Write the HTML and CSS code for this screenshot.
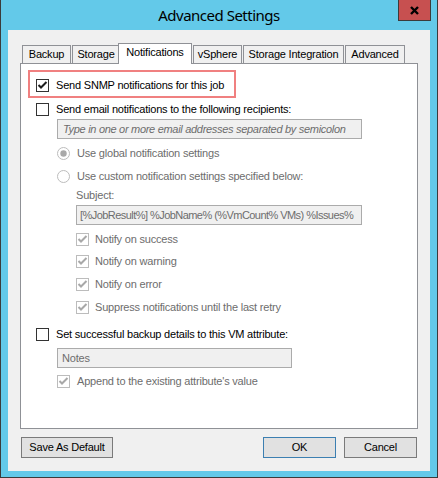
FILE: index.html
```html
<!DOCTYPE html>
<html>
<head>
<meta charset="utf-8">
<title>Advanced Settings</title>
<link rel="stylesheet" href="styles.css">
</head>
<body>
<div class="window">
  <div class="titlebar">
    <div class="title">Advanced Settings</div>
    <div class="close"><svg width="9" height="9" viewBox="0 0 9 9"><path d="M1 1 L8 8 M8 1 L1 8" stroke="#000" stroke-width="2.4" fill="none"/></svg></div>
  </div>
  <div class="client">
    <div class="tabs">
      <div class="tab t-backup">Backup</div>
      <div class="tab t-storage">Storage</div>
      <div class="tab selected t-notif">Notifications</div>
      <div class="tab t-vsphere">vSphere</div>
      <div class="tab t-si">Storage Integration</div>
      <div class="tab t-adv">Advanced</div>
    </div>
    <div class="panel">
      <div class="highlight">
        <div class="row top">
          <svg class="cb" width="13" height="13" viewBox="0 0 13 13"><rect x="0.5" y="0.5" width="12" height="12" fill="#fff" stroke="#333"/><path d="M2.5 6 L5 8.5 L10.5 3" fill="none" stroke="#1e1e1e" stroke-width="2"/></svg>
          <span>Send SNMP notifications for this job</span>
        </div>
      </div>
      <div class="section">
        <div class="row top email-row">
          <svg class="cb" width="13" height="13" viewBox="0 0 13 13"><rect x="0.5" y="0.5" width="12" height="12" fill="#fff" stroke="#333"/></svg>
          <span>Send email notifications to the following recipients:</span>
        </div>
        <div class="sub">
          <div class="field email-field">Type in one or more email addresses separated by semicolon</div>
          <div class="row mid dis global">
            <svg class="cb" width="13" height="13" viewBox="0 0 13 13"><circle cx="6.5" cy="6.5" r="6" fill="#fff" stroke="#bcbcbc"/><circle cx="6.5" cy="6.5" r="3.2" fill="#a9a9a9"/></svg>
            <span>Use global notification settings</span>
          </div>
          <div class="row mid dis custom">
            <svg class="cb" width="13" height="13" viewBox="0 0 13 13"><circle cx="6.5" cy="6.5" r="6" fill="#fff" stroke="#bcbcbc"/></svg>
            <span>Use custom notification settings specified below:</span>
          </div>
          <div class="subsub">
            <div class="subject-label dis">Subject:</div>
            <div class="field subject-field">[%JobResult%] %JobName% (%VmCount% VMs) %Issues%</div>
            <div class="row deep dis n-success">
              <svg class="cb" width="13" height="13" viewBox="0 0 13 13"><rect x="0.5" y="0.5" width="12" height="12" fill="#fff" stroke="#bcbcbc"/><path d="M2.5 6 L5 8.5 L10.5 3" fill="none" stroke="#a8a8a8" stroke-width="2"/></svg>
              <span>Notify on success</span>
            </div>
            <div class="row deep dis n-warning">
              <svg class="cb" width="13" height="13" viewBox="0 0 13 13"><rect x="0.5" y="0.5" width="12" height="12" fill="#fff" stroke="#bcbcbc"/><path d="M2.5 6 L5 8.5 L10.5 3" fill="none" stroke="#a8a8a8" stroke-width="2"/></svg>
              <span>Notify on warning</span>
            </div>
            <div class="row deep dis n-error">
              <svg class="cb" width="13" height="13" viewBox="0 0 13 13"><rect x="0.5" y="0.5" width="12" height="12" fill="#fff" stroke="#bcbcbc"/><path d="M2.5 6 L5 8.5 L10.5 3" fill="none" stroke="#a8a8a8" stroke-width="2"/></svg>
              <span>Notify on error</span>
            </div>
            <div class="row deep dis n-suppress">
              <svg class="cb" width="13" height="13" viewBox="0 0 13 13"><rect x="0.5" y="0.5" width="12" height="12" fill="#fff" stroke="#bcbcbc"/><path d="M2.5 6 L5 8.5 L10.5 3" fill="none" stroke="#a8a8a8" stroke-width="2"/></svg>
              <span>Suppress notifications until the last retry</span>
            </div>
          </div>
        </div>
        <div class="row top vm-row">
          <svg class="cb" width="13" height="13" viewBox="0 0 13 13"><rect x="0.5" y="0.5" width="12" height="12" fill="#fff" stroke="#333"/></svg>
          <span>Set successful backup details to this VM attribute:</span>
        </div>
        <div class="sub">
          <div class="field notes-field">Notes</div>
          <div class="row mid dis append">
            <svg class="cb" width="13" height="13" viewBox="0 0 13 13"><rect x="0.5" y="0.5" width="12" height="12" fill="#fff" stroke="#bcbcbc"/><path d="M2.5 6 L5 8.5 L10.5 3" fill="none" stroke="#a8a8a8" stroke-width="2"/></svg>
            <span>Append to the existing attribute's value</span>
          </div>
        </div>
      </div>
    </div>
    <div class="buttons">
      <div class="btn save">Save As Default</div>
      <div class="btn ok">OK</div>
      <div class="btn cancel">Cancel</div>
    </div>
  </div>
</div>
</body>
</html>
```
FILE: styles.css
```css
* { box-sizing: border-box; }
html, body { margin: 0; padding: 0; }
body {
  width: 438px;
  height: 478px;
  font-family: "Liberation Sans", Arial, sans-serif;
  font-size: 11px;
  color: #000;
  background: #fff;
}
.window {
  width: 438px;
  height: 478px;
  background: #63c9e9;
  border: 1px solid #3b3b3b;
  border-top: none;
  padding: 0 7px 6px;
  display: flex;
  flex-direction: column;
}
.titlebar {
  height: 30px;
  flex: none;
  display: grid;
  grid-template-columns: 1fr auto 1fr;
}
.title {
  grid-column: 2;
  font-family: "Noto Sans", sans-serif;
  font-size: 15px;
  line-height: 30px;
  letter-spacing: -0.5px;
  color: #000;
  white-space: nowrap;
}
.close {
  grid-column: 3;
  justify-self: end;
  align-self: start;
  width: 33px;
  height: 21px;
  margin-right: -1px;
  background: #c75050;
  border: 1px solid #3b3b3b;
  border-top: none;
  display: flex;
  align-items: center;
  justify-content: center;
  padding-top: 1px;
}
.client {
  height: 441px;
  flex: none;
  background: #f0f0f0;
  padding: 13px 12px 13px;
  display: flex;
  flex-direction: column;
  letter-spacing: -0.2px;
}
.tabs {
  height: 20px;
  flex: none;
  display: flex;
  align-items: flex-end;
  padding-left: 2px;
}
.tab {
  height: 18px;
  border: 1px solid #8f9196;
  border-bottom: none;
  background: #f0f0f0;
  text-align: center;
  padding-top: 2px;
  line-height: 13px;
  white-space: nowrap;
  margin-right: 1px;
  flex: none;
}
.tab.selected {
  height: 21px;
  margin-bottom: -1px;
  margin-left: -2px;
  background: #fff;
  position: relative;
  z-index: 1;
}
.t-backup { width: 49px; }
.t-storage { width: 48px; margin-right: 0; }
.t-notif { width: 74px; }
.t-vsphere { width: 49px; }
.t-si { width: 101px; }
.t-adv { width: 60px; }
.panel {
  height: 366px;
  flex: none;
  background: #fff;
  border: 1px solid #8f9196;
  padding: 6px 0 0 7px;
}
.highlight {
  width: 208px;
  height: 28px;
  border: 2px solid #f08080;
  padding: 7px 0 0 6px;
}
.section { padding-left: 8px; }
.sub { padding-left: 21px; }
.subsub { padding-left: 19px; }
.row {
  display: flex;
  align-items: center;
  height: 13px;
  line-height: 13px;
  white-space: nowrap;
}
.row.top { gap: 7px; }
.row.mid { gap: 7px; }
.row.deep { gap: 6px; }
.cb { flex: none; display: block; }
.dis { color: #6d6d6d; }
.field {
  height: 20px;
  border: 1px solid #ababab;
  background: #f0f0f0;
  color: #6d6d6d;
  line-height: 18px;
  padding-left: 3px;
  white-space: nowrap;
  overflow: hidden;
}
.email-row { margin-top: 5px; }
.email-field {
  margin-top: 3px;
  width: 305px;
  font-style: italic;
  padding-left: 5px;
  letter-spacing: -0.3px;
}
.global { margin-top: 8px; }
.custom { margin-top: 10px; }
.subject-label { margin-top: 6px; height: 13px; line-height: 13px; }
.subject-field { margin-top: 3px; width: 286px; letter-spacing: -0.55px; }
.n-success { margin-top: 8px; }
.n-warning { margin-top: 9px; }
.n-error { margin-top: 10px; }
.n-suppress { margin-top: 10px; }
.vm-row { margin-top: 14px; }
.notes-field { margin-top: 7px; width: 235px; padding-left: 4px; }
.append { margin-top: 7px; }
.buttons {
  margin-top: 8px;
  height: 21px;
  flex: none;
  display: flex;
  gap: 8px;
  padding: 0 1px;
}
.btn {
  height: 21px;
  border: 1px solid #7a7a7a;
  background: #e1e1e1;
  line-height: 19px;
  text-align: center;
  white-space: nowrap;
}
.btn.save { width: 92px; margin-right: auto; }
.btn.ok { width: 73px; border-color: #3c7fb1; }
.btn.cancel { width: 73px; }
```
